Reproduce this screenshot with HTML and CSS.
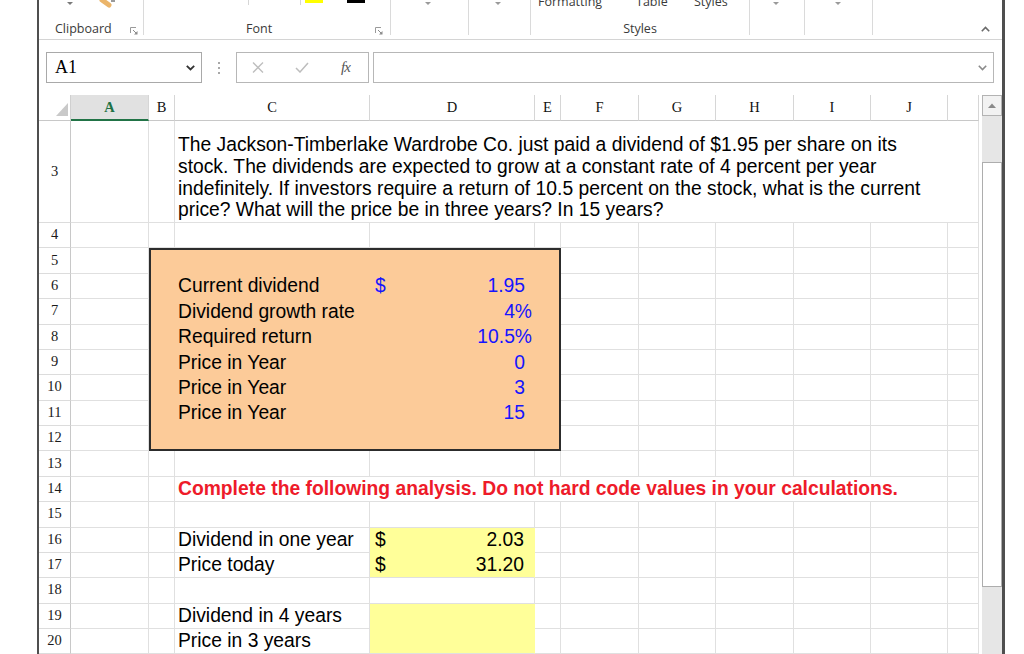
FILE: index.html
```html
<!DOCTYPE html>
<html>
<head>
<meta charset="utf-8">
<title>Sheet</title>
<link rel="stylesheet" href="styles.css">
</head>
<body>
<div class="window">
  <div class="ribbon">
    <div class="grp g1">
      <div class="gtop">
        <svg width="104" height="9" viewBox="0 0 104 9"><polygon points="28,2 34,2 31,5" fill="#7a7a7a"/><line x1="63" y1="0" x2="70" y2="5" stroke="#ebb56a" stroke-width="5" stroke-linecap="round"/><rect x="72" y="0" width="4" height="2" fill="#9a9a9a"/></svg>
      </div>
      <div class="glabel gl1"><span>Clipboard</span><svg class="launch" width="8" height="8" viewBox="0 0 8 8"><polyline points="0.5,6 0.5,0.5 6,0.5" fill="none" stroke="#9a9a9a"/><line x1="3" y1="3" x2="6.5" y2="6.5" stroke="#8a8a8a"/><polygon points="7.5,4 7.5,7.5 4,7.5" fill="#8a8a8a"/></svg></div>
    </div>
    <div class="sep"></div>
    <div class="grp g2">
      <div class="gtop">
        <svg width="246" height="9" viewBox="0 0 246 9"><line x1="104.5" y1="0" x2="104.5" y2="5" stroke="#d6d6d6"/><line x1="156.5" y1="0" x2="156.5" y2="5" stroke="#d6d6d6"/><rect x="161" y="0" width="18" height="3" fill="#ffff00"/><rect x="203" y="0" width="18" height="3" fill="#000"/></svg>
      </div>
      <div class="glabel gl2"><span>Font</span><svg class="launch" width="8" height="8" viewBox="0 0 8 8"><polyline points="0.5,6 0.5,0.5 6,0.5" fill="none" stroke="#9a9a9a"/><line x1="3" y1="3" x2="6.5" y2="6.5" stroke="#8a8a8a"/><polygon points="7.5,4 7.5,7.5 4,7.5" fill="#8a8a8a"/></svg></div>
    </div>
    <div class="sep"></div>
    <div class="grp g3"><div class="gtop"><span class="dd"></span></div></div>
    <div class="sep"></div>
    <div class="grp g4"><div class="gtop"><span class="dd"></span></div></div>
    <div class="sep"></div>
    <div class="grp g5">
      <div class="gtop styles-top">
        <span class="cut cut1">Formatting <i class="mini"></i></span>
        <span class="cut cut2">Table <i class="mini"></i></span>
        <span class="cut cut3">Styles <i class="mini"></i></span>
      </div>
      <div class="glabel gl5">Styles</div>
    </div>
    <div class="sep"></div>
    <div class="grp g6"><div class="gtop"><span class="dd"></span></div></div>
    <div class="sep"></div>
    <div class="grp g7"><div class="gtop"><span class="dd"></span></div></div>
    <div class="sep"></div>
    <div class="grp g8">
      <div class="glabel gl8"><svg width="9" height="6" viewBox="0 0 9 6"><polyline points="0.8,5.2 4.5,1.5 8.2,5.2" fill="none" stroke="#6a6a6a" stroke-width="1.6"/></svg></div>
    </div>
  </div>

  <div class="fbar">
    <div class="namebox"><span class="nbtext">A1</span><svg width="9" height="6" viewBox="0 0 9 6"><polyline points="0.8,0.8 4.5,4.5 8.2,0.8" fill="none" stroke="#333" stroke-width="1.8"/></svg></div>
    <div class="dots"><i></i><i></i><i></i></div>
    <div class="fxbox">
      <svg class="xic" width="12" height="11" viewBox="0 0 12 11"><line x1="1" y1="0.5" x2="11" y2="10.5" stroke="#bdbdbd" stroke-width="1.3"/><line x1="11" y1="0.5" x2="1" y2="10.5" stroke="#bdbdbd" stroke-width="1.3"/></svg>
      <svg class="ckic" width="14" height="11" viewBox="0 0 14 11"><polyline points="1,6 5,10 13,1" fill="none" stroke="#bdbdbd" stroke-width="1.5"/></svg>
      <span class="fx">fx</span>
    </div>
    <div class="finput"><svg width="9" height="6" viewBox="0 0 9 6"><polyline points="0.8,0.8 4.5,4.5 8.2,0.8" fill="none" stroke="#8a8a8a" stroke-width="1.6"/></svg></div>
  </div>

  <div class="sheet">
    <div class="grid">
      <div class="corner"><svg width="31" height="25" viewBox="0 0 31 25"><polygon points="29,8 29,21 17,21" fill="#c9c9c9"/></svg></div><div class="ch sel">A</div><div class="ch">B</div><div class="ch">C</div><div class="ch">D</div><div class="ch">E</div><div class="ch">F</div><div class="ch">G</div><div class="ch">H</div><div class="ch">I</div><div class="ch">J</div><div class="ch"></div>

      <div class="rh">3</div><div class="c"></div><div class="c"></div><div class="c note">The Jackson-Timberlake Wardrobe Co. just paid a dividend of $1.95 per share on its<br>stock. The dividends are expected to grow at a constant rate of 4 percent per year<br>indefinitely. If investors require a return of 10.5 percent on the stock, what is the current<br>price? What will the price be in three years? In 15 years?</div>

      <div class="rh">4</div><div class="c"></div><div class="c"></div><div class="c"></div><div class="c"></div><div class="c"></div><div class="c"></div><div class="c"></div><div class="c"></div><div class="c"></div><div class="c"></div><div class="c"></div>

      <div class="rh">5</div><div class="c"></div>
      <div class="box">
        <div class="bsp"></div>
        <div class="bl">Current dividend</div><div class="bv"><span class="cur">$</span><span class="n">1.95</span></div>
        <div class="bl">Dividend growth rate</div><div class="bv"><span></span><span class="p">4%</span></div>
        <div class="bl">Required return</div><div class="bv"><span></span><span class="p">10.5%</span></div>
        <div class="bl">Price in Year</div><div class="bv"><span></span><span class="n">0</span></div>
        <div class="bl">Price in Year</div><div class="bv"><span></span><span class="n">3</span></div>
        <div class="bl">Price in Year</div><div class="bv"><span></span><span class="n">15</span></div>
      </div>
      <div class="c"></div><div class="c"></div><div class="c"></div><div class="c"></div><div class="c"></div><div class="c"></div>

      <div class="rh">6</div><div class="c"></div><div class="c"></div><div class="c"></div><div class="c"></div><div class="c"></div><div class="c"></div><div class="c"></div>
      <div class="rh">7</div><div class="c"></div><div class="c"></div><div class="c"></div><div class="c"></div><div class="c"></div><div class="c"></div><div class="c"></div>
      <div class="rh">8</div><div class="c"></div><div class="c"></div><div class="c"></div><div class="c"></div><div class="c"></div><div class="c"></div><div class="c"></div>
      <div class="rh">9</div><div class="c"></div><div class="c"></div><div class="c"></div><div class="c"></div><div class="c"></div><div class="c"></div><div class="c"></div>
      <div class="rh">10</div><div class="c"></div><div class="c"></div><div class="c"></div><div class="c"></div><div class="c"></div><div class="c"></div><div class="c"></div>
      <div class="rh">11</div><div class="c"></div><div class="c"></div><div class="c"></div><div class="c"></div><div class="c"></div><div class="c"></div><div class="c"></div>
      <div class="rh">12</div><div class="c"></div><div class="c"></div><div class="c"></div><div class="c"></div><div class="c"></div><div class="c"></div><div class="c"></div>

      <div class="rh">13</div><div class="c"></div><div class="c"></div><div class="c"></div><div class="c"></div><div class="c"></div><div class="c"></div><div class="c"></div><div class="c"></div><div class="c"></div><div class="c"></div><div class="c"></div>

      <div class="rh">14</div><div class="c"></div><div class="c"></div><div class="c red">Complete the following analysis. Do not hard code values in your calculations.</div><div class="c"></div>

      <div class="rh">15</div><div class="c"></div><div class="c"></div><div class="c"></div><div class="c"></div><div class="c"></div><div class="c"></div><div class="c"></div><div class="c"></div><div class="c"></div><div class="c"></div><div class="c"></div>

      <div class="rh">16</div><div class="c"></div><div class="c"></div><div class="c txt">Dividend in one year</div><div class="c val yel ytop"><span class="cur">$</span><span class="n">2.03</span></div><div class="c"></div><div class="c"></div><div class="c"></div><div class="c"></div><div class="c"></div><div class="c"></div><div class="c"></div>
      <div class="rh">17</div><div class="c"></div><div class="c"></div><div class="c txt">Price today</div><div class="c val yel"><span class="cur">$</span><span class="n">31.20</span></div><div class="c"></div><div class="c"></div><div class="c"></div><div class="c"></div><div class="c"></div><div class="c"></div><div class="c"></div>

      <div class="rh">18</div><div class="c"></div><div class="c"></div><div class="c"></div><div class="c"></div><div class="c"></div><div class="c"></div><div class="c"></div><div class="c"></div><div class="c"></div><div class="c"></div><div class="c"></div>

      <div class="rh">19</div><div class="c"></div><div class="c"></div><div class="c txt">Dividend in 4 years</div><div class="c val yel ytop"></div><div class="c"></div><div class="c"></div><div class="c"></div><div class="c"></div><div class="c"></div><div class="c"></div><div class="c"></div>
      <div class="rh">20</div><div class="c"></div><div class="c"></div><div class="c txt">Price in 3 years</div><div class="c val yel"></div><div class="c"></div><div class="c"></div><div class="c"></div><div class="c"></div><div class="c"></div><div class="c"></div><div class="c"></div>
    </div>

    <div class="vscroll">
      <div class="sbtn"><svg width="8" height="5" viewBox="0 0 8 5"><polygon points="0,5 4,0.5 8,5" fill="#8a8a8a"/></svg></div>
      <div class="strack top"></div>
      <div class="sthumb"></div>
      <div class="strack rest"></div>
    </div>
  </div>
</div>
</body>
</html>
```

FILE: styles.css
```css
* { box-sizing: border-box; }
html, body { margin: 0; padding: 0; background: #fff; }
body { font-family: "Liberation Sans", Arial, Helvetica, sans-serif; color: #000; }

.window {
  margin-left: 37px;
  width: 968px;
  height: 654px;
  border-left: 2px solid #4f4f4f;
  border-right: 3px solid #4f4f4f;
  overflow: hidden;
}

/* ---------- ribbon ---------- */
.ribbon {
  display: flex;
  height: 40px;
  border-bottom: 1px solid #d4d4d4;
}
.grp {
  display: flex;
  flex-direction: column;
  height: 39px;
  font-family: "Open Sans", "Noto Sans", sans-serif;
  font-size: 12.5px;
  color: #3a3a3a;
}
.gtop { height: 9px; display: flex; align-items: flex-start; overflow: hidden; }
.gtop svg { display: block; }
.sep { width: 1px; height: 35px; background: #dadada; flex: none; }
.g1 { width: 104px; }
.g2 { width: 246px; }
.g3 { width: 77px; }
.g4 { width: 61px; }
.g5 { width: 218px; }
.g6 { width: 54px; }
.g7 { width: 67px; }
.g8 { width: 129px; }

.glabel {
  margin-top: auto;
  margin-bottom: 2px;
  height: 16px;
  line-height: 16px;
  display: flex;
  align-items: center;
  white-space: nowrap;
}
.gl1 { padding-left: 16px; padding-right: 5px; justify-content: space-between; }
.gl2 { padding-left: 102px; padding-right: 7px; justify-content: space-between; }
.gl5 { justify-content: center; }
.gl8 { justify-content: flex-end; padding-right: 12px; }
.launch { display: block; margin-top: 3px; }

.dd {
  width: 0; height: 0;
  border-left: 3px solid transparent;
  border-right: 3px solid transparent;
  border-top: 3px solid #9a9a9a;
  margin-top: 2px;
}
.g3 .gtop { padding-left: 34px; }
.g4 .gtop { padding-left: 26px; }
.g6 .gtop { padding-left: 23px; }
.g7 .gtop { padding-left: 30px; }

.styles-top { overflow: visible; height: 9px; }
.cut {
  display: block;
  line-height: 16px;
  margin-top: -6px;
  white-space: nowrap;
  color: #3a3a3a;
}
.cut1 { width: 98px; margin-left: 7px; }
.cut2 { width: 58px; }
.cut3 { width: 50px; }
.mini {
  display: inline-block;
  width: 0; height: 0;
  border-left: 2.5px solid transparent;
  border-right: 2.5px solid transparent;
  border-top: 3px solid #a0a0a0;
  vertical-align: 7px;
}

/* ---------- formula bar ---------- */
.fbar {
  display: flex;
  height: 31px;
  margin-top: 12px;
  padding-left: 7px;
}
.namebox {
  width: 156px;
  border: 1px solid #a9a9a9;
  display: flex;
  align-items: center;
  justify-content: space-between;
  padding: 0 6px 0 8px;
}
.nbtext {
  font-family: "Liberation Serif", "Times New Roman", serif;
  font-size: 18px;
  color: #000;
}
.dots {
  width: 34px;
  display: flex;
  flex-direction: column;
  align-items: center;
  justify-content: center;
  gap: 3px;
}
.dots i { display: block; width: 2px; height: 2px; background: #a8a8a8; }
.fxbox {
  width: 133px;
  border: 1px solid #b7b7b7;
  display: flex;
  align-items: center;
  padding-left: 15px;
}
.ckic { margin-left: 31px; }
.fx {
  margin-left: 32px;
  font-family: "Liberation Serif", "Times New Roman", serif;
  font-style: italic;
  font-size: 15px;
  color: #555;
  letter-spacing: -1px;
}
.finput {
  width: 621px;
  margin-left: 4px;
  border: 1px solid #b7b7b7;
  display: flex;
  align-items: center;
  justify-content: flex-end;
  padding-right: 6px;
}

/* ---------- sheet ---------- */
.sheet {
  display: flex;
  margin-top: 12px;
  height: 559px;
}
.grid {
  width: 940px;
  display: grid;
  grid-template-columns: 32px 78px 26px 195px 165px 26px 78px 77px 78px 77px 77px 31px;
  grid-template-rows: 26px 102px repeat(17, 25.375px);
  font-size: 19.3px;
}
.corner {
  border-right: 1px solid #d0d0d0;
  border-bottom: 1px solid #c8c8c8;
}
.corner svg { display: block; }
.ch {
  border-right: 1px solid #d6d6d6;
  border-bottom: 1px solid #c8c8c8;
  font-family: "Liberation Serif", "Times New Roman", serif;
  font-size: 14.5px;
  line-height: 25px;
  text-align: center;
  color: #111;
}
.ch.sel {
  background: #e1e1e1;
  color: #1e7145;
  font-weight: bold;
  border-bottom: 2px solid #217346;
}
.rh {
  border-right: 1px solid #c8c8c8;
  border-bottom: 1px solid #dcdcdc;
  font-family: "Liberation Serif", "Times New Roman", serif;
  font-size: 14.5px;
  color: #1a1a1a;
  display: flex;
  align-items: center;
  justify-content: center;
  padding-bottom: 1px;
}
.c {
  border-right: 1px solid #e0e0e0;
  border-bottom: 1px solid #e0e0e0;
  white-space: nowrap;
  display: flex;
  align-items: center;
}
.note {
  grid-column: span 9;
  align-items: flex-end;
  white-space: normal;
  line-height: 21.67px;
  padding: 0 3px 1px 3px;
}
.txt { padding-left: 3px; }
.red {
  grid-column: span 8;
  padding-left: 3px;
  color: #ee1b2a;
  font-weight: bold;
}
.val {
  justify-content: space-between;
  padding: 0 3px 0 5px;
}
.yel { background: #ffff99; border-right-color: #ffff99; }
.ytop { border-bottom-color: #ffff99; }

.n { padding-right: 7px; }

.box {
  grid-column: span 4;
  grid-row: span 8;
  background: #fccb99;
  box-shadow: inset 0 0 0 2px #2c2c2c;
  display: grid;
  grid-template-columns: 26px 195px 165px 26px;
  grid-template-rows: repeat(8, 1fr);
}
.bsp { grid-column: 1 / -1; }
.bl {
  grid-column: 2;
  padding-left: 3px;
  display: flex;
  align-items: center;
  white-space: nowrap;
}
.bv {
  grid-column: 3;
  display: flex;
  align-items: center;
  justify-content: space-between;
  padding: 0 3px 0 5px;
  color: #1515ff;
}

/* ---------- scrollbar ---------- */
.vscroll {
  margin-left: 3px;
  width: 20px;
  display: flex;
  flex-direction: column;
}
.sbtn {
  height: 21px;
  border: 1px solid #b3b3b3;
  background: #f2f2f2;
  display: flex;
  align-items: center;
  justify-content: center;
}
.strack { background: #e6e6e6; }
.strack.top { height: 46px; }
.sthumb { height: 425px; border: 1px solid #adadad; background: #fff; }
.strack.rest { flex: 1; }
```
